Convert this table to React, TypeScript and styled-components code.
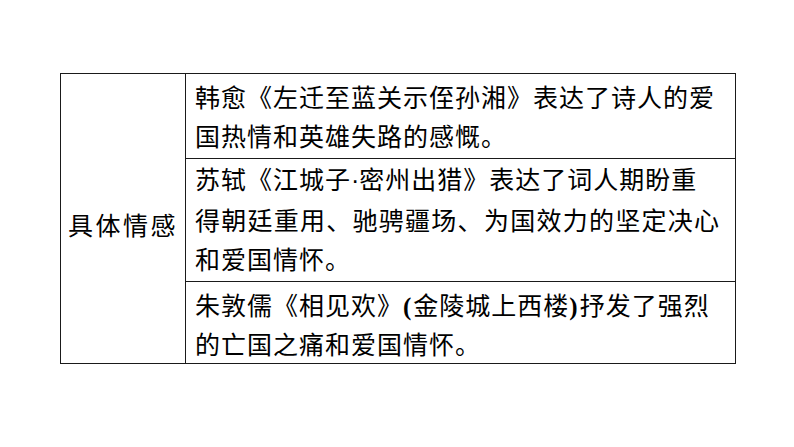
import React from "react";
import styled, { createGlobalStyle } from "styled-components";

const Global = createGlobalStyle`
  html, body { margin: 0; padding: 0; background: #ffffff; }
  body { font-family: "Noto Sans CJK SC", "Noto Sans", sans-serif; color: #000; }
`;

const Page = styled.div`
  width: 794px;
  height: 447px;
  padding: 73px 0 0 60px;
  box-sizing: border-box;
`;

const Table = styled.div`
  display: grid;
  grid-template-columns: 125px 549px;
  grid-template-rows: 84px 123px 82px;
  border: 1px solid #1a1a1a;
  width: 676px;
  box-sizing: border-box;
`;

const HeadCell = styled.div`
  grid-column: 1;
  grid-row: 1 / span 3;
  border-right: 1px solid #1a1a1a;
  display: flex;
  align-items: center;
  justify-content: center;
  padding-top: 11px;
  box-sizing: border-box;
  font-size: 25px;
  letter-spacing: 2.5px;
  line-height: 39px;
  white-space: nowrap;
`;

const BodyCell = styled.div<{ $top: number; $lh: number; $first?: boolean }>`
  grid-column: 2;
  border-top: ${(p) => (p.$first ? "none" : "1px solid #1a1a1a")};
  padding: ${(p) => p.$top}px 0 0 9px;
  box-sizing: border-box;
  font-size: 25px;
  letter-spacing: 1px;
  line-height: ${(p) => p.$lh}px;
  overflow: visible;
`;

const Line = styled.span<{ $justify?: boolean }>`
  display: block;
  width: 525px;
  white-space: ${(p) => (p.$justify ? "normal" : "nowrap")};
  text-align: ${(p) => (p.$justify ? "justify" : "left")};
  text-align-last: ${(p) => (p.$justify ? "justify" : "auto")};
`;

const Paren = styled.span`
  font-family: "Liberation Serif", serif;
  font-weight: bold;
  letter-spacing: 2px;
`;

const Dot = styled.span`
  font-family: "Liberation Sans", sans-serif;
  letter-spacing: 0;
`;

export default function App() {
  return (
    <>
      <Global />
      <Page>
        <Table>
          <HeadCell>具体情感</HeadCell>
          <BodyCell $first $top={3} $lh={39}>
            <Line>韩愈《左迁至蓝关示侄孙湘》表达了诗人的爱</Line>
            <Line>国热情和英雄失路的感慨。</Line>
          </BodyCell>
          <BodyCell $top={0} $lh={39}>
            <Line>
              苏轼《江城子<Dot>·</Dot>密州出猎》表达了词人期盼重
            </Line>
            <Line $justify>得朝廷重用、驰骋疆场、为国效力的坚定决心</Line>
            <Line>和爱国情怀。</Line>
          </BodyCell>
          <BodyCell $top={4} $lh={37}>
            <Line>
              朱敦儒《相见欢》<Paren>(</Paren>金陵城上西楼<Paren>)</Paren>抒发了强烈
            </Line>
            <Line>的亡国之痛和爱国情怀。</Line>
          </BodyCell>
        </Table>
      </Page>
    </>
  );
}
